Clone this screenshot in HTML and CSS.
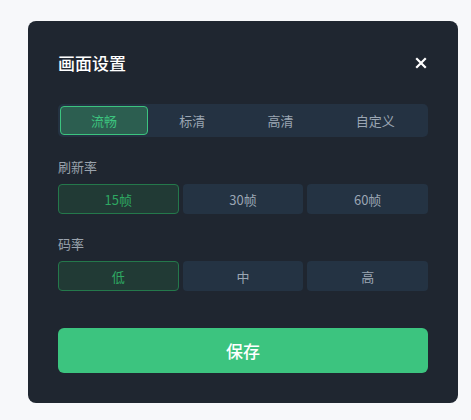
FILE: index.html
```html
<!DOCTYPE html>
<html>
  <head>
    <meta charset="utf-8" />
    <meta name="viewport" content="width=device-width, initial-scale=1" />
    <title>画面设置</title>
    <link rel="stylesheet" href="styles.css">
  </head>
  <body>
    <div class="dialog">
      <div class="dialog-header">
        <h1>画面设置</h1>
        <button class="close" type="button" aria-label="关闭">
          <svg width="14" height="14" viewBox="0 0 14 14">
            <path d="M3 3 L11 11 M11 3 L3 11" stroke="#fff" stroke-width="2.2" stroke-linecap="square" />
          </svg>
        </button>
      </div>

      <div class="presets">
        <button class="preset active">流畅</button>
        <button class="preset">标清</button>
        <button class="preset">高清</button>
        <button class="preset">自定义</button>
      </div>

      <div class="field">
        <div class="field-label">刷新率</div>
        <div class="options">
          <button class="option active">15帧</button>
          <button class="option">30帧</button>
          <button class="option">60帧</button>
        </div>
      </div>

      <div class="field">
        <div class="field-label">码率</div>
        <div class="options">
          <button class="option active">低</button>
          <button class="option">中</button>
          <button class="option">高</button>
        </div>
      </div>

      <button class="save" type="button">保存</button>
    </div>
  </body>
</html>
```

FILE: styles.css
```css
body {
  margin: 0;
  background-color: #f7f8fa;
  font-family: "Noto Sans CJK SC", "Noto Sans", sans-serif;
}
button {
  font-family: inherit;
  border: 0;
  padding: 0;
  cursor: pointer;
}
.dialog {
  width: 430px;
  margin: 21px 0 0 28px;
  padding: 30px;
  box-sizing: border-box;
  background-color: #1f2630;
  border-radius: 8px;
}
.dialog-header {
  display: flex;
  align-items: center;
  justify-content: space-between;
  height: 24px;
}
h1 {
  margin: 0;
  color: #fff;
  font-size: 17px;
  font-weight: 500;
  line-height: 24px;
}
.close {
  display: flex;
  background: none;
  width: 14px;
  height: 14px;
}
.presets {
  display: flex;
  margin-top: 29px;
  padding: 2px;
  background-color: #243242;
  border-radius: 5px;
}
.preset {
  flex: 1 1 auto;
  height: 29px;
  padding: 0 12px;
  background: none;
  border: 1px solid transparent;
  border-radius: 4px;
  color: #9ba6b3;
  font-size: 13px;
}
.preset.active {
  background-color: #2c5e50;
  border-color: #3cc47f;
  color: #3cc47f;
}
.field {
  margin-top: 20px;
}
.field-label {
  color: #9aa3ad;
  font-size: 13px;
  line-height: 20px;
}
.options {
  display: grid;
  grid-template-columns: repeat(3, 1fr);
  gap: 4px;
  margin-top: 7px;
}
.option {
  height: 30px;
  background-color: #243343;
  border: 1px solid transparent;
  border-radius: 4px;
  color: #9ba6b3;
  font-size: 13px;
}
.option.active {
  background-color: #213a35;
  border-color: #24784b;
  color: #2ea862;
}
.save {
  display: block;
  width: 100%;
  height: 45px;
  margin-top: 37px;
  background-color: #3cc47f;
  border-radius: 6px;
  color: #fff;
  font-size: 17px;
  font-weight: 500;
}
```
